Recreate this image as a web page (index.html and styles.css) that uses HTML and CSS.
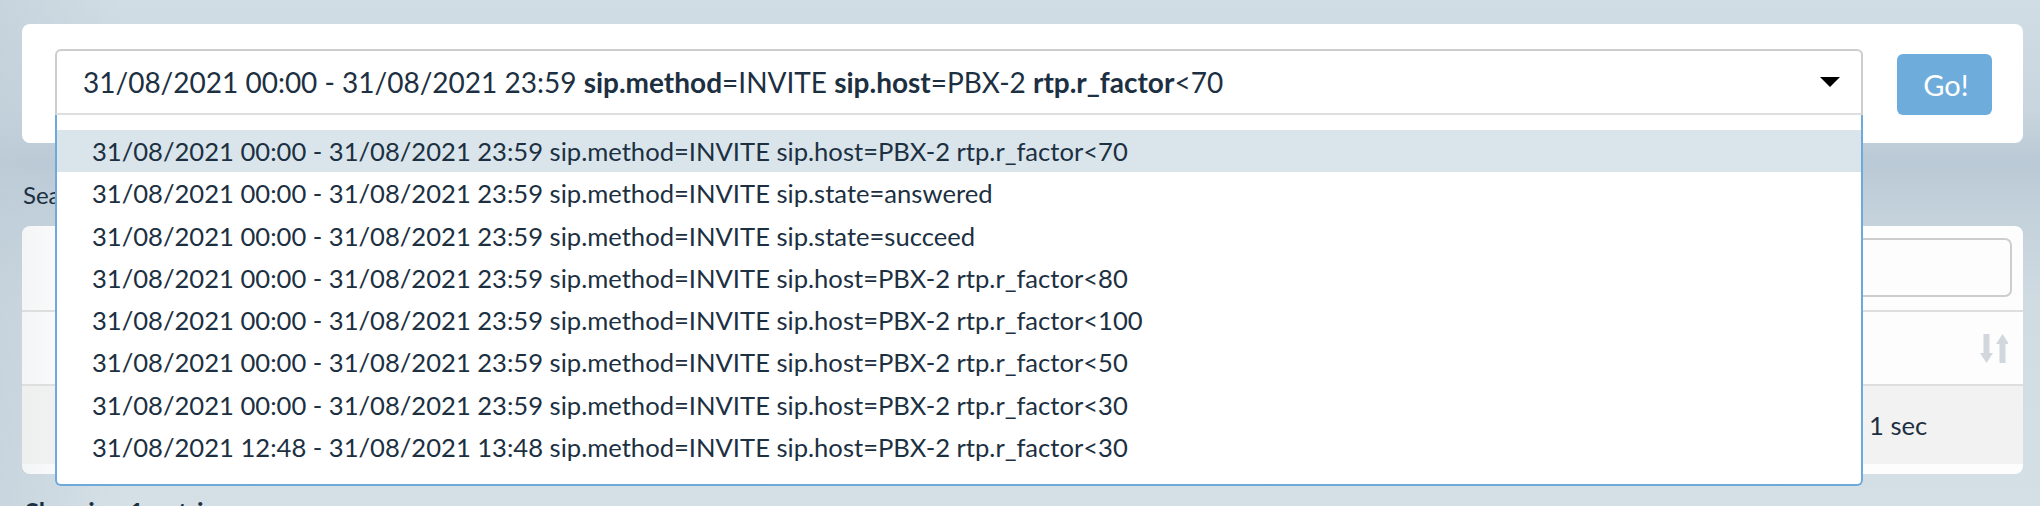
FILE: index.html
```html
<!DOCTYPE html>
<html lang="en">
<head>
<meta charset="utf-8">
<title>Search</title>
<link rel="stylesheet" href="styles.css">
</head>
<body>
<div class="page">
  <div class="search-card">
    <div class="combo">
      <div class="select">
        <span class="value">31/08/2021 00:00 - 31/08/2021 23:59 <b>sip.method</b>=INVITE <b>sip.host</b>=PBX-2 <b>rtp.r_factor</b>&lt;70</span>
        <span class="caret"></span>
      </div>
      <ul class="dropdown">
        <li class="active">31/08/2021 00:00 - 31/08/2021 23:59 sip.method=INVITE sip.host=PBX-2 rtp.r_factor&lt;70</li>
        <li>31/08/2021 00:00 - 31/08/2021 23:59 sip.method=INVITE sip.state=answered</li>
        <li>31/08/2021 00:00 - 31/08/2021 23:59 sip.method=INVITE sip.state=succeed</li>
        <li>31/08/2021 00:00 - 31/08/2021 23:59 sip.method=INVITE sip.host=PBX-2 rtp.r_factor&lt;80</li>
        <li>31/08/2021 00:00 - 31/08/2021 23:59 sip.method=INVITE sip.host=PBX-2 rtp.r_factor&lt;100</li>
        <li>31/08/2021 00:00 - 31/08/2021 23:59 sip.method=INVITE sip.host=PBX-2 rtp.r_factor&lt;50</li>
        <li>31/08/2021 00:00 - 31/08/2021 23:59 sip.method=INVITE sip.host=PBX-2 rtp.r_factor&lt;30</li>
        <li>31/08/2021 12:48 - 31/08/2021 13:48 sip.method=INVITE sip.host=PBX-2 rtp.r_factor&lt;30</li>
      </ul>
    </div>
    <button class="go">Go!</button>
  </div>

  <div class="label">Search results</div>

  <div class="results-card">
    <div class="toolbar">
      <div class="filter"></div>
    </div>
    <div class="head-row">
      <svg class="sort" viewBox="0 0 28 29" width="28" height="29" aria-hidden="true">
        <rect x="3.5" y="0" width="6" height="20" fill="#d1d7dd"/>
        <polygon points="0,19 13,19 6.5,29" fill="#d1d7dd"/>
        <rect x="19.5" y="9" width="6" height="20" fill="#d1d7dd"/>
        <polygon points="16,10 29,10 22.5,0" fill="#d1d7dd"/>
      </svg>
    </div>
    <div class="data-row">
      <div class="cell">1 sec</div>
    </div>
  </div>

  <div class="showing">Showing 1 entries</div>
</div>
</body>
</html>
```

FILE: styles.css
```css
html, body {
  margin: 0;
  padding: 0;
}

body {
  font-family: Lato, "Open Sans", sans-serif;
  color: #1c3042;
  height: 506px;
  overflow: hidden;
  background:
    linear-gradient(90deg, rgba(190, 205, 216, 0.55) 0%, rgba(255, 255, 255, 0) 6%),
    linear-gradient(180deg, #d1dde4 0%, #c8d5de 22%, #b9c9d5 32%, #c3d1db 42%, #d0dbe2 60%, #d5e0e6 100%);
}

.page {
  padding: 24px 17px 0 22px;
}

.search-card {
  background: #fff;
  border-radius: 8px;
  padding: 25px 31px 28px 33px;
  display: flex;
  align-items: flex-end;
  gap: 34px;
}

.combo {
  position: relative;
  flex: 1;
}

.select {
  height: 66px;
  box-sizing: border-box;
  border: 2px solid #cdcdcd;
  border-bottom-color: #dedede;
  border-radius: 6px 6px 0 0;
  padding: 0 21px 0 26px;
  display: flex;
  align-items: center;
  justify-content: space-between;
  font-size: 28px;
}

.select b {
  font-weight: 700;
}

.caret {
  width: 0;
  height: 0;
  border-left: 10px solid transparent;
  border-right: 10px solid transparent;
  border-top: 10px solid #000;
}

.dropdown {
  position: absolute;
  left: 0;
  right: 0;
  top: 100%;
  margin: 0;
  list-style: none;
  background: #fff;
  border: 2px solid #6ea9dc;
  border-top: none;
  border-radius: 0 0 6px 6px;
  padding: 15px 0 16px;
  z-index: 5;
}

.dropdown li {
  font-size: 25.6px;
  line-height: 42.25px;
  padding-left: 35px;
  white-space: nowrap;
}

.dropdown li.active {
  background: #d9e5eb;
}

.go {
  width: 95px;
  height: 61px;
  border: none;
  border-radius: 6px;
  background: #6eacdc;
  color: #fff;
  font-family: Lato, "Open Sans", sans-serif;
  font-size: 29px;
  padding: 0 0 0 3px;
}

.label {
  font-size: 24px;
  line-height: 30px;
  padding: 37px 0 0 1px;
  height: 46px;
}

.results-card {
  background: linear-gradient(90deg, #f4f5f6 0%, #fdfdfd 3%, #fdfdfd 100%);
  border-radius: 8px;
  padding-bottom: 10px;
}

.toolbar {
  height: 86px;
  box-sizing: border-box;
  padding: 12px 11px 0 0;
  display: flex;
  justify-content: flex-end;
  border-bottom: 2px solid #dedede;
}

.filter {
  width: 420px;
  height: 59px;
  box-sizing: border-box;
  border: 2px solid #cdcdcd;
  border-radius: 7px;
  background: #fdfdfd;
}

.head-row {
  height: 74px;
  box-sizing: border-box;
  border-bottom: 2px solid #dedede;
  display: flex;
  justify-content: flex-end;
  align-items: center;
  padding-right: 15px;
}

.data-row {
  height: 78px;
  background: linear-gradient(90deg, #eeefef 0%, #f2f2f2 3%, #f2f2f2 100%);
  display: flex;
  justify-content: flex-end;
  align-items: center;
}

.cell {
  width: 154px;
  font-size: 25.6px;
}

.showing {
  font-size: 25.6px;
  font-weight: 700;
  padding: 22px 0 0 3px;
}
```
